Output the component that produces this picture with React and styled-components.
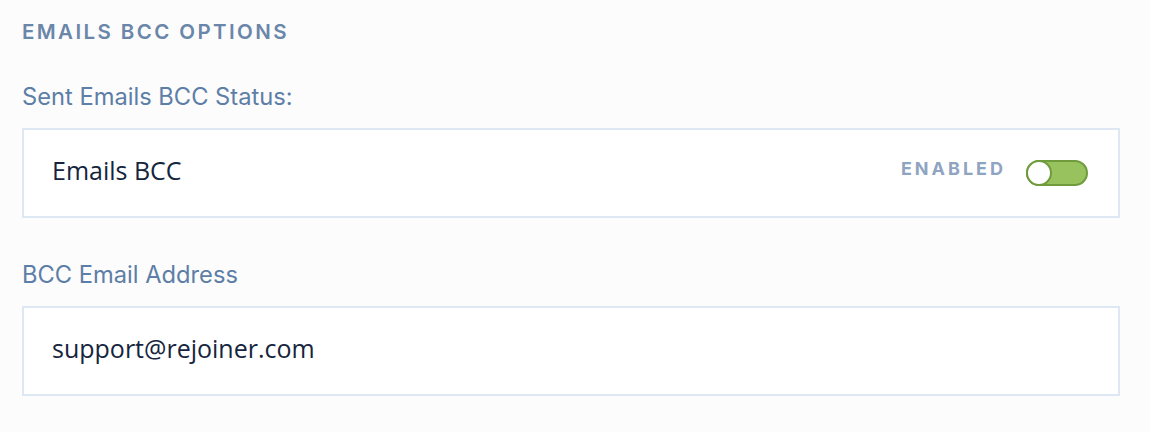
import React from "react";
import styled, { createGlobalStyle } from "styled-components";

const Global = createGlobalStyle`
  html, body { margin: 0; padding: 0; background: #fcfcfc; }
  * { box-sizing: border-box; }
`;

const Page = styled.div`
  padding: 20px 30px 0 22px;
  width: 1150px;
  font-family: "Open Sans", sans-serif;
`;

const Heading = styled.h2`
  margin: 0;
  font-family: Inter, sans-serif;
  font-weight: 600;
  font-size: 20.5px;
  line-height: 24px;
  letter-spacing: 2.4px;
  color: #6a86a9;
  text-transform: uppercase;
`;

const Label = styled.div`
  margin-top: ${(p) => p.$top}px;
  font-family: Inter, sans-serif;
  font-size: 23.7px;
  line-height: 28px;
  color: #5d7ea6;
`;

const Box = styled.div`
  margin-top: 17px;
  width: 1098px;
  height: 90px;
  background: #ffffff;
  border: 2px solid #dee8f5;
  display: flex;
  align-items: center;
  justify-content: space-between;
  padding: 0 30px 7px 28px;
`;

const Value = styled.span`
  font-size: 25px;
  color: #15253d;
`;

const Right = styled.div`
  display: flex;
  align-items: center;
  gap: 20px;
`;

const Status = styled.span`
  font-family: Inter, sans-serif;
  font-weight: 700;
  font-size: 18px;
  line-height: 22px;
  letter-spacing: 3px;
  color: #8fa4c1;
  margin-bottom: 2px;
`;

const Toggle = styled.div`
  position: relative;
  width: 62px;
  height: 26px;
  border-radius: 13px;
  background: #98c25d;
  border: 2px solid #6f9b3c;
  margin-top: 6px;
`;

const Knob = styled.div`
  position: absolute;
  left: -2px;
  top: -2px;
  width: 26px;
  height: 26px;
  border-radius: 50%;
  background: #fff;
  border: 2px solid #6f9b3c;
`;

export default function App() {
  return (
    <Page>
      <Global />
      <Heading>Emails BCC Options</Heading>
      <Label $top={39}>Sent Emails BCC Status:</Label>
      <Box>
        <Value>Emails BCC</Value>
        <Right>
          <Status>ENABLED</Status>
          <Toggle>
            <Knob />
          </Toggle>
        </Right>
      </Box>
      <Label $top={43}>BCC Email Address</Label>
      <Box>
        <Value>support@rejoiner.com</Value>
      </Box>
    </Page>
  );
}
